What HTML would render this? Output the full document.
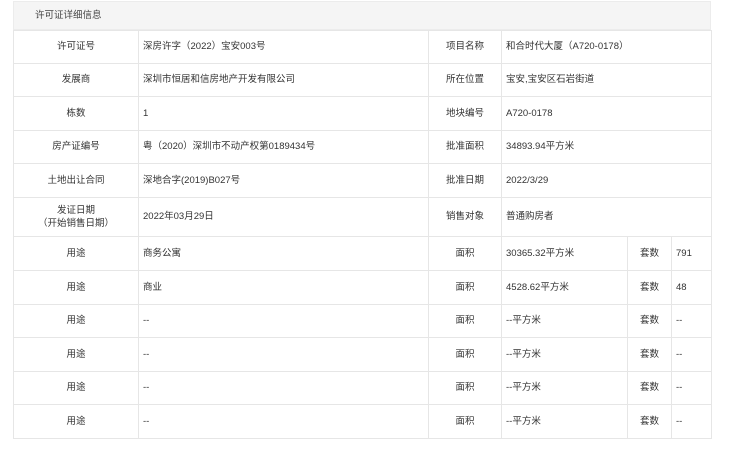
<!DOCTYPE html>
<html><head><meta charset="utf-8"><style>
body{margin:0;background:#fff;font-family:"Liberation Sans","Noto Sans CJK SC",sans-serif;font-size:9.5px;color:#333;}
.hd{position:absolute;left:13px;top:1px;width:698px;height:29px;background:#f5f5f5;border:1px solid #ececec;box-sizing:border-box;line-height:27px;padding-left:21px;color:#444}
table{position:absolute;left:13px;top:30px;border-collapse:collapse;table-layout:fixed;}
td{border:1px solid #e6e6e6;padding:0 0 0 4px;white-space:nowrap;overflow:hidden;vertical-align:middle;line-height:14px}
td span{display:inline-block;vertical-align:middle}
td.l{text-align:center;padding:0}
</style></head><body>
<div class="hd">许可证详细信息</div>
<table>
<colgroup><col style="width:125px"><col style="width:290px"><col style="width:73px"><col style="width:126px"><col style="width:44px"><col style="width:40px"></colgroup>
<tr style="height:33px"><td class="l">许可证号</td><td>深房许字（2022）宝安003号</td><td class="l">项目名称</td><td colspan="3">和合时代大厦（A720-0178）</td></tr>
<tr style="height:33px"><td class="l">发展商</td><td>深圳市恒居和信房地产开发有限公司</td><td class="l">所在位置</td><td colspan="3">宝安,宝安区石岩街道</td></tr>
<tr style="height:34px"><td class="l">栋数</td><td>1</td><td class="l">地块编号</td><td colspan="3">A720-0178</td></tr>
<tr style="height:33px"><td class="l">房产证编号</td><td>粤（2020）深圳市不动产权第0189434号</td><td class="l">批准面积</td><td colspan="3">34893.94平方米</td></tr>
<tr style="height:34px"><td class="l">土地出让合同</td><td>深地合字(2019)B027号</td><td class="l">批准日期</td><td colspan="3">2022/3/29</td></tr>
<tr style="height:39px"><td class="l" style="line-height:13px">发证日期<br>（开始销售日期）</td><td>2022年03月29日</td><td class="l">销售对象</td><td colspan="3">普通购房者</td></tr>
<tr style="height:34px"><td class="l">用途</td><td>商务公寓</td><td class="l">面积</td><td>30365.32平方米</td><td class="l">套数</td><td>791</td></tr>
<tr style="height:34px"><td class="l">用途</td><td>商业</td><td class="l">面积</td><td>4528.62平方米</td><td class="l">套数</td><td>48</td></tr>
<tr style="height:33px"><td class="l">用途</td><td>--</td><td class="l">面积</td><td>--平方米</td><td class="l">套数</td><td>--</td></tr>
<tr style="height:34px"><td class="l">用途</td><td>--</td><td class="l">面积</td><td>--平方米</td><td class="l">套数</td><td>--</td></tr>
<tr style="height:33px"><td class="l">用途</td><td>--</td><td class="l">面积</td><td>--平方米</td><td class="l">套数</td><td>--</td></tr>
<tr style="height:34px"><td class="l">用途</td><td>--</td><td class="l">面积</td><td>--平方米</td><td class="l">套数</td><td>--</td></tr>
</table>
</body></html>
